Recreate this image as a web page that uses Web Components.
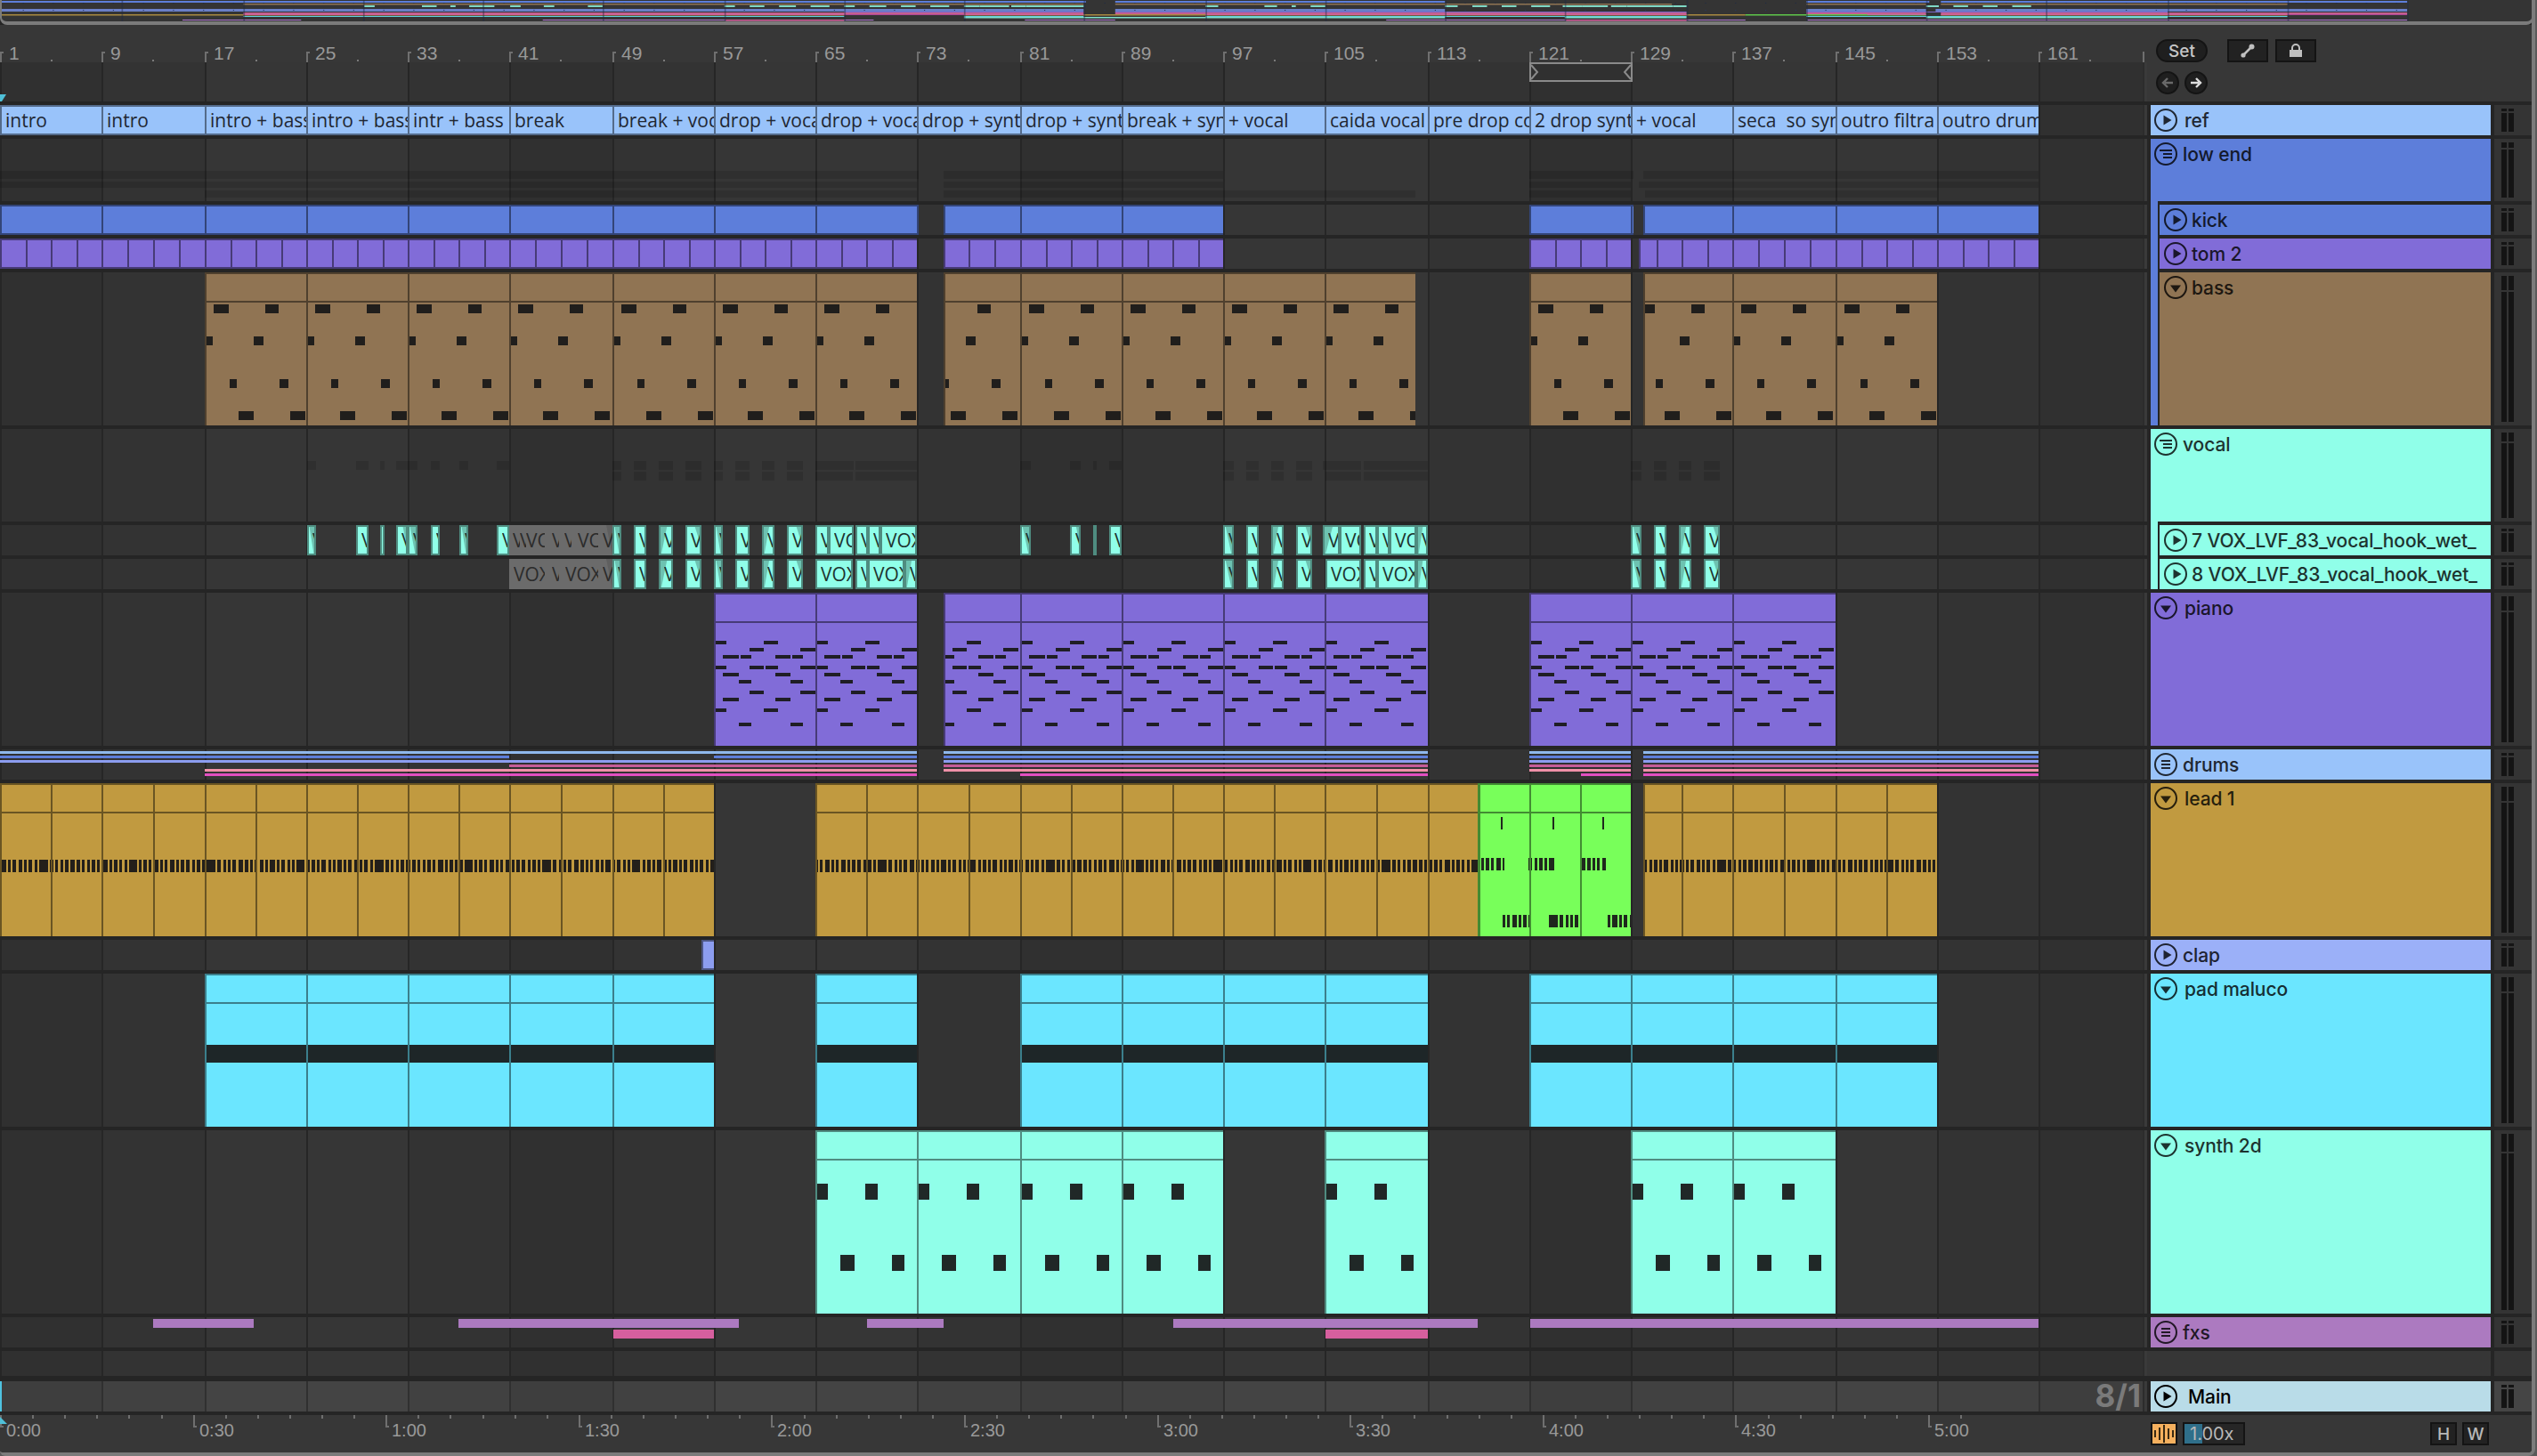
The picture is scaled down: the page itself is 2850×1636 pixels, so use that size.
<!DOCTYPE html>
<html>
<head>
<meta charset="utf-8">
<title>Arrangement</title>
<style>
  html, body { margin: 0; padding: 0; background: #2a2a2a; overflow: hidden; }
</style>
</head>
<body>
<live-set>
  <live-overview></live-overview>
  <live-ruler></live-ruler>
  <live-track key="ref" color="#99c3fa" h="34" icon="play" tx="38">ref</live-track>
  <live-track key="lowend" color="#5d7eda" h="70" icon="group" tx="36">low end</live-track>
  <live-track key="kick" color="#5d7eda" h="34" icon="play" tx="36" indent="#5d7eda">kick</live-track>
  <live-track key="tom" color="#816cd8" h="34" icon="play" tx="36" indent="#5d7eda">tom 2</live-track>
  <live-track key="bass" color="#907453" h="172" icon="fold" tx="36" indent="#5d7eda">bass</live-track>
  <live-track key="vocal" color="#90ffe9" h="104" icon="group" tx="36">vocal</live-track>
  <live-track key="vox7" color="#90ffe9" h="34" icon="play" tx="36" indent="#90ffe9">7 VOX_LVF_83_vocal_hook_wet_</live-track>
  <live-track key="vox8" color="#90ffe9" h="34" icon="play" tx="36" indent="#90ffe9">8 VOX_LVF_83_vocal_hook_wet_</live-track>
  <live-track key="piano" color="#816cd8" h="172" icon="fold" tx="38">piano</live-track>
  <live-track key="drums" color="#99c3fa" h="34" icon="lines" tx="36">drums</live-track>
  <live-track key="lead" color="#c19a40" h="172" icon="fold" tx="38">lead 1</live-track>
  <live-track key="clap" color="#9bb0f8" h="34" icon="play" tx="36">clap</live-track>
  <live-track key="pad" color="#6be6ff" h="172" icon="fold" tx="38">pad maluco</live-track>
  <live-track key="synth" color="#90ffe9" h="206" icon="fold" tx="38">synth 2d</live-track>
  <live-track key="fxs" color="#ac7ac0" h="34" icon="lines" tx="36">fxs</live-track>
  <live-track key="empty" h="28" gap="6"></live-track>
  <live-track key="main" color="#b9dce8" h="34" icon="play" tx="42" main>Main</live-track>
  <live-timebar></live-timebar>
</live-set>

<script>
// grid line positions of the arrangement, one per 8 bars
const GRID = [0,114,230,344,458,572,688,802,916,1030,1146,1260,1374,1488,1604,1718,1832,1946,2062,2176,2290,2406];
const SHADES = [0x30, 0x33, 0x36, 0x36, 0x33];

function hex(v) { const s = v.toString(16); return '#' + s + s + s; }

function laneBg(lift, line) {
  const stops = [];
  for (let i = 0; i < GRID.length - 1; i++) {
    const x = GRID[i];
    stops.push(`${line} ${x}px ${x + 2}px`);
    stops.push(`${hex(SHADES[i % 5] + lift)} ${x + 2}px ${GRID[i + 1]}px`);
  }
  return `linear-gradient(to right, ${stops.join(', ')})`;
}

const KICK = [[0,1032],[1060,1374],[1718,1835],[1846,2290]];
const TOM = [[0,1030],[1060,1374],[1718,1832],[1841,2290]];
const BASS = [[230,1030],[1060,1590],[1718,1832],[1846,2176]];
const PIANO = [[802,1030],[1060,1604],[1718,2062]];
const LEAD = [[0,802],[916,1660],[1846,2176]];
const PAD = [[230,802],[916,1030],[1146,1604],[1718,2176]];
const SYNTH = [[916,1374],[1488,1604],[1832,2062]];

const REF_LABELS = ['intro','intro','intro + bass','intro + bass','intr + bass +','break','break + voc','drop + voca','drop + voca','drop + synt','drop + synt','break + syn','+ vocal','caida vocal','pre drop co','2 drop synt','+ vocal','seca  so syn','outro filtra','outro drum'];

// per-8-bar note patterns: [y, height, [x, w], ...]
const BASS_NOTES = [
  [36,10,[10,17],[68,15]],
  [72,10,[2,7],[55,11]],
  [120,10,[28,8],[84,10]],
  [156,10,[38,17],[96,17]]
];
const PIANO_NOTES = [
  [54,4,[2,12],[56,16]],
  [62,4,[40,16],[97,17]],
  [70,4,[10,18],[30,12],[69,17],[88,12]],
  [82,4,[2,12],[40,16],[58,14],[97,17]],
  [90,4,[10,18],[69,17]],
  [98,4,[28,14],[86,14]],
  [110,4,[40,16],[97,17]],
  [118,4,[10,18],[69,17]],
  [130,4,[2,12],[56,16]],
  [146,4,[28,14],[86,14]]
];
const PAD_NOTES = [[80,20,[0,116]]];
const SYNTH_NOTES = [
  [60,18,[2,12],[56,14]],
  [140,18,[28,16],[86,14]]
];

function leadNotes() {
  const widths = [5,3,4,4,3,4,3,10,4,3,3,4,5,4,3,3,4,3,6,3,4,3,3,9,3,4,3,5,3,3];
  const gaps = [2,2,3,2,2,3,2,2,2,3,2,2];
  const out = [];
  let x = 2, i = 0;
  while (x < 2290) {
    out.push([x, widths[i % widths.length]]);
    x += widths[i % widths.length] + gaps[i % gaps.length];
    i++;
  }
  return out;
}

const VOX7 = [[345,355,'V','out'],[400,414,'V',''],[427,432,'V',''],[445,458,'V','small'],[458,469,'V','out'],[484,494,'V',''],[516,526,'V','out'],[558,572,'V','']]
  .concat([[688,698,'V','out'],[712,726,'V',''],[740,756,'V','in'],[770,788,'V','small'],[802,812,'V','out'],[826,842,'V',''],[856,870,'V','in'],[884,902,'V','small'],[916,931,'V',''],[931,959,'VOX',''],[961,975,'V',''],[975,989,'V',''],[989,1030,'VOX','']])
  .concat([[1146,1158,'V','out'],[1202,1214,'V','small'],[1228,1232,'V',''],[1246,1260,'V','']])
  .concat([[1374,1386,'V','out'],[1400,1414,'V',''],[1428,1442,'V','in'],[1456,1474,'V','small'],[1486,1505,'V','in'],[1505,1529,'VOX',''],[1532,1547,'V',''],[1547,1561,'V',''],[1561,1591,'VOX',''],[1591,1604,'V','in']])
  .concat([[1832,1844,'V','out'],[1858,1872,'V',''],[1886,1900,'V','in'],[1914,1932,'V','small']]);
const VOX8 = [[688,698,'V','out'],[712,726,'V',''],[740,756,'V','in'],[770,788,'V','small'],[802,812,'V','out'],[826,842,'V',''],[856,870,'V','in'],[884,902,'V','small'],[916,958,'VOX',''],[961,975,'V',''],[975,1016,'VOX',''],[1016,1030,'V','in']]
  .concat([[1374,1386,'V','out'],[1400,1414,'V',''],[1428,1442,'V','in'],[1456,1474,'V','small'],[1489,1529,'VOX',''],[1532,1547,'V',''],[1547,1591,'VOX',''],[1591,1604,'V','in']])
  .concat([[1832,1844,'V','out'],[1858,1872,'V',''],[1886,1900,'V','in'],[1914,1932,'V','small']]);
const GRAY7 = [[576,8,'V'],[584,7,'V'],[591,21,'VO'],[620,8,'V'],[634,8,'V'],[649,23,'VO'],[677,11,'V']];
const GRAY8 = [[577,35,'VOX'],[620,8,'V'],[635,37,'VOX'],[677,11,'V']];

const DRUM_ALL = [[1060,1604],[1718,1832],[1846,2290]];
const DRUMS = [
  ['#8fb8ec', 2, [[0,1030]].concat(DRUM_ALL)],
  ['#5d7eda', 7, [[0,572],[802,1030]].concat(DRUM_ALL)],
  ['#8c9df0', 12, [[0,1030]].concat(DRUM_ALL)],
  ['#c65c98', 17, [[572,1030]].concat(DRUM_ALL)],
  ['#f090a8', 22, [[230,1030]].concat(DRUM_ALL)],
  ['#e24fc0', 27, [[230,1030],[1146,1604],[1776,1832],[1846,2290]]]
];
const FXS = [
  ['#ac7ac0', 2, [[172,285],[515,830],[974,1060],[1318,1660],[1719,2290]]],
  ['#d65f9e', 14, [[689,802],[1489,1604]]]
];

// returns the inner markup of one lane
function laneMarkup(key, color) {
  const bars = (list, h) => list.map(([c, y, ranges]) => ranges.map(([a, b]) =>
    `<i class="bar" style="left:${a}px;width:${b - a}px;top:${y}px;height:${h}px;background:${c}"></i>`).join('')).join('');
  const faint = (ranges, y, h) => ranges.map(([a, b]) =>
    `<i class="bar faint" style="left:${a}px;width:${b - a}px;top:${y}px;height:${h}px"></i>`).join('');

  const noteRects = (a, b, pattern) => {
    let s = '';
    for (let g = 0; g < 21; g++) {
      for (const row of pattern) {
        const [y, h, ...xs] = row;
        for (const [nx, w] of xs) {
          const left = GRID[g] + nx;
          if (left + w <= a || left >= b) continue;
          s += `<i class="note" style="left:${left - a - 2}px;width:${w}px;top:${y - 2}px;height:${h}px"></i>`;
        }
      }
    }
    return s;
  };
  const lines = (a, b, div) => {
    let s = '';
    for (let g = 0; g < 21; g++) {
      for (let d = 0; d < div; d++) {
        const x = Math.round(GRID[g] + (GRID[g + 1] - GRID[g]) * d / div);
        if (x <= a || x >= b) continue;
        s += `<i class="line" style="left:${x - a - 2}px"></i>`;
      }
    }
    return s;
  };
  const tall = (a, b, inner, c, div) =>
    `<div class="clip tall" style="left:${a}px;width:${b - a}px;--c:${c}">${inner}${lines(a, b, div || 1)}<i class="barline"></i></div>`;
  const short = (a, b, c, div, label) =>
    `<div class="clip short" style="left:${a}px;width:${b - a}px;--c:${c}">${lines(a, b, div || 1)}${label ? `<span>${label}</span>` : ''}</div>`;

  switch (key) {
    case 'ref':
      return REF_LABELS.map((t, i) => short(GRID[i], GRID[i + 1], color, 1, t)).join('');
    case 'lowend':
      return faint(KICK, 36, 9) + faint(TOM, 48, 7) + faint(BASS.slice(0, 1).concat([[1060, 1590], [1718, 1832], [1848, 2176]]), 58, 8);
    case 'kick':
      return KICK.map(([a, b]) => short(a, b, color)).join('');
    case 'tom':
      return TOM.map(([a, b]) => short(a, b, color, 4)).join('');
    case 'bass':
      return BASS.map(([a, b]) => tall(a, b, noteRects(a, b, BASS_NOTES), color)).join('');
    case 'vocal':
      return faint(VOX7.map(v => [v[0], v[1]]), 36, 10) + faint(VOX8.map(v => [v[0], v[1]]), 48, 10);
    case 'vox7':
    case 'vox8': {
      const gray = key === 'vox7' ? GRAY7 : GRAY8;
      const list = key === 'vox7' ? VOX7 : VOX8;
      let s = `<div class="gray"><i class="grayfade"></i>`;
      s += gray.map(([x, w, t]) => `<div class="gsub" style="left:${x - 572}px;width:${w}px"><span>${t}</span></div>`).join('');
      s += `</div>`;
      s += list.map(([a, b, t, fade]) =>
        `<div class="clip vox" style="left:${a}px;width:${b - a}px;--c:${color}">${fade ? `<i class="fade ${fade}"></i>` : ''}<span>${t}</span></div>`).join('');
      return s;
    }
    case 'piano':
      return PIANO.map(([a, b]) => tall(a, b, noteRects(a, b, PIANO_NOTES), color)).join('');
    case 'drums':
      return bars(DRUMS, 3);
    case 'lead': {
      const strip = leadNotes();
      const one = (a, b) => strip.filter(([x, w]) => x + w > a && x < b).map(([x, w]) =>
        `<i class="note" style="left:${x - a - 2}px;width:${w}px;top:84px;height:14px;background:#231f1a"></i>`).join('');
      const green = [[1664,1690,84],[1720,1746,84],[1778,1804,84],[1690,1718,148],[1746,1776,148],[1804,1832,148]];
      let g = green.map(([x0, x1, y]) => strip.filter(([x, w]) => x + w > x0 && x < x1).map(([x, w]) =>
        `<i class="note" style="left:${x - 1662}px;width:${Math.min(w, x1 - x)}px;top:${y - 2}px;height:14px"></i>`).join('')).join('');
      g += [1686, 1744, 1800].map(x => `<i class="note" style="left:${x - 1662}px;width:2px;top:36px;height:14px"></i>`).join('');
      return LEAD.map(([a, b]) => tall(a, b, one(a, b), color, 2)).join('') + tall(1660, 1832, g, '#78ff5a', 2);
    }
    case 'clap':
      return `<div class="clip short" style="left:788px;width:14px;--c:#8c9df0"></div>`;
    case 'pad':
      return PAD.map(([a, b]) => tall(a, b, noteRects(a, b, PAD_NOTES), color)).join('');
    case 'synth':
      return SYNTH.map(([a, b]) => tall(a, b, noteRects(a, b, SYNTH_NOTES), color)).join('');
    case 'fxs':
      return bars(FXS, 10);
  }
  return '';
}

function trackIcon(kind, ink) {
  let inner = '';
  if (kind === 'play') inner = `<path d="M10.5 7.5 L19.5 13 L10.5 18.5 Z" fill="${ink}"/>`;
  if (kind === 'fold') inner = `<path d="M7 10.5 L19 10.5 L13 18.5 Z" fill="${ink}"/>`;
  if (kind === 'group') inner = `<path d="M6 9 H20 M10 13 H20 M10 17 H20" stroke="${ink}" stroke-width="2" fill="none"/>`;
  if (kind === 'lines') inner = `<path d="M8 9 H18 M8 13 H18 M8 17 H18" stroke="${ink}" stroke-width="2" fill="none"/>`;
  return `<svg width="26" height="26" viewBox="0 0 26 26"><circle cx="13" cy="13" r="12" fill="none" stroke="${ink}" stroke-width="2"/>${inner}</svg>`;
}

class LiveSet extends HTMLElement {
  constructor() {
    super();
    this.attachShadow({ mode: 'open' });
    this.shadowRoot.innerHTML = `
      <style>
        :host { display: block; width: 2850px; height: 1636px; background: #5a5a5a; }
        .frame {
          width: 2844px;
          height: 1632px;
          background: #252525;
          border-right: 4px solid #7b7b7b;
          border-bottom: 4px solid #7b7b7b;
          border-bottom-right-radius: 8px;
          border-bottom-left-radius: 6px;
          overflow: hidden;
          display: flex;
          flex-direction: column;
        }
      </style>
      <div class="frame"><slot></slot></div>
    `;
  }
}

class LiveOverview extends HTMLElement {
  constructor() {
    super();
    this.attachShadow({ mode: 'open' });
  }
  connectedCallback() {
    const k = 1.18;
    const rect = (a, b, y, h, c, o) => `<rect x="${(a * k).toFixed(1)}" y="${y}" width="${((b - a) * k).toFixed(1)}" height="${h}" fill="${c}"${o ? ` opacity="${o}"` : ''}/>`;
    let s = '';
    KICK.forEach(([a, b]) => { s += rect(a, b, 1, 2, '#5d7eda'); });
    BASS.forEach(([a, b]) => { s += rect(a, b, 4, 1.5, '#907453'); });
    VOX7.forEach(v => { s += rect(v[0], v[1], 6, 2, '#7fd8c5'); });
    TOM.forEach(([a, b]) => { s += rect(a, b, 10, 3, '#6a7fc8'); });
    PIANO.forEach(([a, b]) => { s += rect(a, b, 13, 1, '#7a66c8'); });
    LEAD.forEach(([a, b]) => { s += rect(a, b, 16, 1.5, '#a98a40'); });
    s += rect(1660, 1832, 16, 1.5, '#5fc84a');
    DRUMS[4][2].forEach(([a, b]) => { s += rect(a, b, 14, 2, '#c4608f'); });
    DRUMS[5][2].forEach(([a, b]) => { s += rect(a, b, 16, 1, '#e24fc0', 0.7); });
    PAD.forEach(([a, b]) => { s += rect(a, b, 18, 1, '#5fd0e0'); });
    SYNTH.forEach(([a, b]) => { s += rect(a, b, 19, 1.5, '#80e0cc'); });
    FXS[0][2].forEach(([a, b]) => { s += rect(a, b, 22, 1, '#b07ad0'); });
    FXS[1][2].forEach(([a, b]) => { s += rect(a, b, 22, 1.5, '#d65f9e'); });
    for (let x = 20; x < 2290; x += 28.6) { s += rect(x, x + 1, 3, 1, '#1e2a44') + rect(x, x + 1, 11, 1, '#2a3660'); }
    GRID.slice(1, 21).forEach(x => { s += rect(x, x + 1.4, 0, 24, '#1f2a44', 0.45); });
    this.shadowRoot.innerHTML = `
      <style>
        :host {
          display: block;
          height: 24px;
          margin-right: -2px;
          background: #343434;
          border: solid #7b7b7b;
          border-width: 0 2px 4px 2px;
          border-radius: 0 0 8px 8px;
          overflow: hidden;
        }
        svg { display: block; }
      </style>
      <svg width="2846" height="24">${s}</svg>
    `;
  }
}

class LiveRuler extends HTMLElement {
  constructor() {
    super();
    this.attachShadow({ mode: 'open' });
  }
  connectedCallback() {
    let marks = '';
    for (let g = 0; g < 21; g++) {
      const x = GRID[g];
      marks += `<b class="tick" style="left:${x}px"></b><b class="dot" style="left:${x + 57}px"></b>`;
      marks += `<span class="num" style="left:${x + 10}px">${g * 8 + 1}</span>`;
    }
    this.shadowRoot.innerHTML = `
      <style>
        :host {
          display: grid;
          grid-template-columns: 2407px 5px 1fr;
          height: 86px;
          margin-bottom: 4px;
          background: #373737;
          color: #999;
          font-family: "Liberation Sans", sans-serif;
        }
        .time { display: flex; flex-direction: column; }
        .beats { position: relative; height: 42px; }
        .tick { position: absolute; top: 30px; width: 2px; height: 12px; background: #6f6f6f; }
        .tick::after { content: ""; position: absolute; left: 0; top: 0; width: 4px; height: 2px; background: #6f6f6f; }
        .dot { position: absolute; top: 39px; width: 2px; height: 2px; background: #7a7a7a; }
        .num { position: absolute; top: 20px; font-size: 21px; line-height: 24px; }
        .lane { position: relative; flex: 1; background: ${laneBg(0, '#262626')}; }
        .brace { position: absolute; left: 1718px; top: 0; }
        .cue { position: absolute; left: 0; bottom: 0; }
        .sep { position: relative; background: #3a3a3a; border-left: 2px solid #2c2c2c; box-sizing: border-box; margin-top: 42px; }
        .sep::before { content: ""; position: absolute; left: -2px; top: -12px; width: 2px; height: 12px; background: #6f6f6f; }
        .ctl { display: flex; flex-direction: column; gap: 10px; padding: 16px 0 0 10px; }
        .row { display: flex; align-items: center; }
        .pill {
          width: 58px; height: 26px; box-sizing: border-box;
          display: flex; align-items: center; justify-content: center;
          background: #1f1f1f; border: 2px solid #141414; border-radius: 13px;
          color: #c6c6c6; font: 500 19px "Inter", sans-serif;
        }
        .btn {
          width: 46px; height: 26px; box-sizing: border-box;
          display: flex; align-items: center; justify-content: center;
          background: #222; border: 2px solid #141414; margin-left: 8px;
        }
        .btn.first { margin-left: 22px; }
        .nav {
          width: 26px; height: 26px; box-sizing: border-box;
          display: flex; align-items: center; justify-content: center;
          background: #1f1f1f; border: 2px solid #141414; border-radius: 50%; margin-right: 6px;
        }
      </style>
      <div class="time">
        <div class="beats">${marks}</div>
        <div class="lane">
          <svg class="brace" width="116" height="22">
            <path d="M1 1 H115 V21 H1 Z" fill="none" stroke="#8a8a8a" stroke-width="2"/>
            <path d="M2 3 L9 11 L2 19 M114 3 L107 11 L114 19" fill="none" stroke="#8a8a8a" stroke-width="2"/>
          </svg>
          <svg class="cue" width="8" height="8"><path d="M0 0 H7 L2 8 H0 Z" fill="#4fc0d8"/></svg>
        </div>
      </div>
      <div class="sep"></div>
      <div class="ctl">
        <div class="row">
          <div class="pill">Set</div>
          <div class="btn first"><svg width="18" height="18" viewBox="0 0 18 18"><path d="M4 14 L14 4" stroke="#c0c0c0" stroke-width="2.5"/><circle cx="13.5" cy="4.5" r="3" fill="#c0c0c0"/><circle cx="4" cy="14" r="2.6" fill="#c0c0c0"/></svg></div>
          <div class="btn"><svg width="16" height="16" viewBox="0 0 16 16"><path d="M4 7 V5 a4 4 0 0 1 8 0 V7" fill="none" stroke="#c0c0c0" stroke-width="2"/><rect x="1" y="7" width="14" height="8" fill="#c0c0c0"/></svg></div>
        </div>
        <div class="row">
          <div class="nav"><svg width="14" height="14" viewBox="0 0 14 14"><path d="M13 7 H4 M7 2 L2 7 L7 12" fill="none" stroke="#6a6a6a" stroke-width="2.4"/></svg></div>
          <div class="nav"><svg width="14" height="14" viewBox="0 0 14 14"><path d="M1 7 H10 M7 2 L12 7 L7 12" fill="none" stroke="#e0e0e0" stroke-width="2.4"/></svg></div>
        </div>
      </div>
    `;
  }
}

class LiveTrack extends HTMLElement {
  constructor() {
    super();
    this.attachShadow({ mode: 'open' });
  }
  connectedCallback() {
    const key = this.getAttribute('key');
    const color = this.getAttribute('color') || '';
    const h = +this.getAttribute('h');
    const indent = this.getAttribute('indent');
    const isMain = this.hasAttribute('main');
    const gap = this.getAttribute('gap') || 4;
    const ink = isMain ? '#000' : `color-mix(in srgb, ${color} 20%, black)`;
    const seg = Math.max(2, Math.round((h - 8) / 10));
    const meter = color ? `<div class="meter"><div class="col"><b style="height:${seg}px"></b><b class="rest"></b></div><div class="col"><b style="height:${seg}px"></b><b class="rest"></b></div></div>` : '<div class="meter"></div>';
    const head = color ? `
      <div class="head ${indent ? 'in' : ''}">
        ${indent ? `<i class="stripe" style="background:${indent}"></i>` : ''}
        <div class="title">
          ${trackIcon(this.getAttribute('icon'), ink)}
          <span class="name" style="left:${(+this.getAttribute('tx'))}px"><slot></slot></span>
        </div>
      </div>` : '<div class="head blank"></div>';
    this.shadowRoot.innerHTML = `
      <style>
        :host {
          display: grid;
          grid-template-columns: 2407px 5px 4px 382px 4px 42px;
          height: ${h}px;
          margin-bottom: ${gap}px;
          font-family: "Inter", "Noto Sans", sans-serif;
        }
        .lane {
          position: relative;
          overflow: hidden;
          background: ${isMain ? laneBg(14, '#303030') : laneBg(0, '#262626')};
        }
        .sep { background: #3a3a3a; border-left: 2px solid #2c2c2c; box-sizing: border-box; }
        .head { grid-column: 4; position: relative; background: ${color}; color: ${ink}; }
        .head.blank { background: #363636; grid-column: 3 / 5; }
        .head.in { background: none; display: grid; grid-template-columns: 8px 1fr; column-gap: 2px; }
        .stripe { position: absolute; left: 0; top: -4px; bottom: 0; width: 8px; }
        .head.in .title { grid-column: 2; background: ${color}; }
        .title { position: relative; height: 100%; padding: 4px 0 0 4px; box-sizing: border-box; }
        .head.in .title { padding-left: 5px; }
        svg { display: block; }
        .name {
          position: absolute; top: 0; height: 34px;
          display: flex; align-items: center;
          font-size: 21px; font-weight: 500;
          letter-spacing: -0.1px;
          white-space: nowrap;
        }
        .meter {
          grid-column: 6;
          display: flex; gap: 2px;
          padding: 4px 20px 4px 8px;
          background: ${isMain ? '#454545' : '#343434'};
        }
        .col { display: flex; flex-direction: column; gap: 2px; width: 6px; }
        .col b { display: block; background: #141414; }
        .col b.rest { flex: 1; }
        .clip { position: absolute; top: 0; bottom: 0; overflow: hidden; background: var(--c); box-sizing: border-box; --d: color-mix(in srgb, var(--c) 55%, black); border-left: 2px solid var(--d); }
        .clip.short { border-top: 2px solid var(--d); border-bottom: 2px solid var(--d); }
        .clip.tall { border-top: 2px solid var(--d); }
        .clip.vox { border: 2px solid var(--d); }
        .clip span, .gsub span {
          position: absolute; left: 4px; right: 0; top: 0; bottom: 0;
          overflow: hidden;
          display: flex; align-items: center;
          font: 21px "Open Sans", sans-serif;
          white-space: pre;
          color: color-mix(in srgb, var(--c) 20%, black);
        }
        .line { position: absolute; top: 0; bottom: 0; width: 2px; background: var(--d); }
        .barline { position: absolute; left: 0; right: 0; top: 30px; height: 2px; background: var(--d); }
        .note { position: absolute; background: color-mix(in srgb, var(--c) 7%, #181818); }
        .bar { position: absolute; }
        .bar.faint { background: rgba(0,0,0,.13); }
        .fade { position: absolute; inset: 0; background: color-mix(in srgb, var(--c) 76%, black); }
        .fade.out { clip-path: polygon(10% 0, 100% 0, 100% 100%, 90% 100%); }
        .fade.in { clip-path: polygon(0 0, 60% 0, 8% 100%, 0 100%); }
        .fade.small { clip-path: polygon(62% 0, 100% 0, 100% 55%); }
        .gray { position: absolute; left: 572px; width: 116px; top: 0; bottom: 0; background: #6b6b6b; overflow: hidden; }
        .gsub { position: absolute; top: 0; bottom: 0; overflow: hidden; --c: #6b6b6b; }
        .gsub span { left: 0; color: #2b2b2b; }
        .grayfade { position: absolute; inset: 0; background: #5f5f5f; clip-path: polygon(94% 0, 100% 0, 100% 100%); }
      </style>
      <div class="lane">${laneMarkup(key, color)}${isMain ? '<i class="bar" style="left:0;top:0;bottom:0;width:2px;background:#4fc3e0"></i>' : ''}</div>
      <div class="sep"></div>
      ${head}
      ${meter}
    `;
    if (isMain) {
      const sig = document.createElement('span');
      sig.textContent = '8/1';
      sig.style.cssText = 'position:absolute;right:2px;top:-1px;font:700 35px/34px "Inter",sans-serif;color:#7a7a7a';
      this.shadowRoot.querySelector('.lane').appendChild(sig);
    }
  }
}

class LiveTimebar extends HTMLElement {
  constructor() {
    super();
    this.attachShadow({ mode: 'open' });
  }
  connectedCallback() {
    let marks = '';
    const step = 216.6 / 6;
    for (let i = 1; i < 62; i++) {
      const x = Math.round(i * step);
      if (i % 6) marks += `<b class="t" style="left:${x}px"></b>`;
    }
    const times = ['0:00','0:30','1:00','1:30','2:00','2:30','3:00','3:30','4:00','4:30','5:00'];
    times.forEach((t, i) => {
      const x = Math.round(i * 216.6);
      marks += `<b class="major" style="left:${x}px"></b><span class="lbl" style="left:${x + 7}px">${t}</span>`;
    });
    const waves = [8,14,20,12,8].map(v => `<i style="height:${v}px"></i>`).join('');
    this.shadowRoot.innerHTML = `
      <style>
        :host {
          display: grid;
          grid-template-columns: 2416px 1fr;
          height: 42px;
          background: #373737;
          color: #999;
          font-family: "Liberation Sans", sans-serif;
        }
        .time { position: relative; overflow: hidden; }
        .t { position: absolute; top: 0; width: 2px; height: 4px; background: #6f6f6f; }
        .major { position: absolute; top: 0; width: 2px; height: 14px; background: #6f6f6f; }
        .major::after { content: ""; position: absolute; left: 0; bottom: 0; width: 4px; height: 2px; background: #6f6f6f; }
        .lbl { position: absolute; top: 6px; font-size: 20px; line-height: 22px; }
        .cue { position: absolute; left: 0; top: 2px; }
        .tools { display: flex; align-items: flex-start; padding-top: 8px; padding-right: 48px; }
        .wave {
          width: 30px; height: 26px; box-sizing: border-box;
          display: flex; align-items: center; justify-content: center; gap: 3px;
          background: #f5b05e; border: 2px solid #141414;
        }
        .wave i { width: 2px; background: #3a2a12; }
        .rate {
          position: relative; width: 70px; height: 26px; box-sizing: border-box; margin-left: 6px;
          background: #262626; border: 2px solid #141414;
          color: #b8b8b8; font: 20px/22px "Inter", sans-serif; text-align: left;
        }
        .rate i { position: absolute; left: 0; top: 0; bottom: 0; width: 20px; background: #2f6f8a; }
        .rate span { position: relative; padding-left: 6px; }
        .key {
          width: 30px; height: 26px; box-sizing: border-box;
          display: flex; align-items: center; justify-content: center;
          background: #222; border: 2px solid #141414; color: #b8b8b8;
          font: 500 19px "Inter", sans-serif; margin-left: 6px;
        }
        .key.first { margin-left: auto; }
      </style>
      <div class="time">${marks}
        <svg class="cue" width="10" height="8"><path d="M0 0 L8 8 H0 Z" fill="#4fc0d8"/></svg>
      </div>
      <div class="tools">
        <div class="wave">${waves}</div>
        <div class="rate"><i></i><span>1.00x</span></div>
        <div class="key first">H</div>
        <div class="key">W</div>
      </div>
    `;
  }
}

customElements.define('live-set', LiveSet);
customElements.define('live-overview', LiveOverview);
customElements.define('live-ruler', LiveRuler);
customElements.define('live-track', LiveTrack);
customElements.define('live-timebar', LiveTimebar);
</script>
</body>
</html>
